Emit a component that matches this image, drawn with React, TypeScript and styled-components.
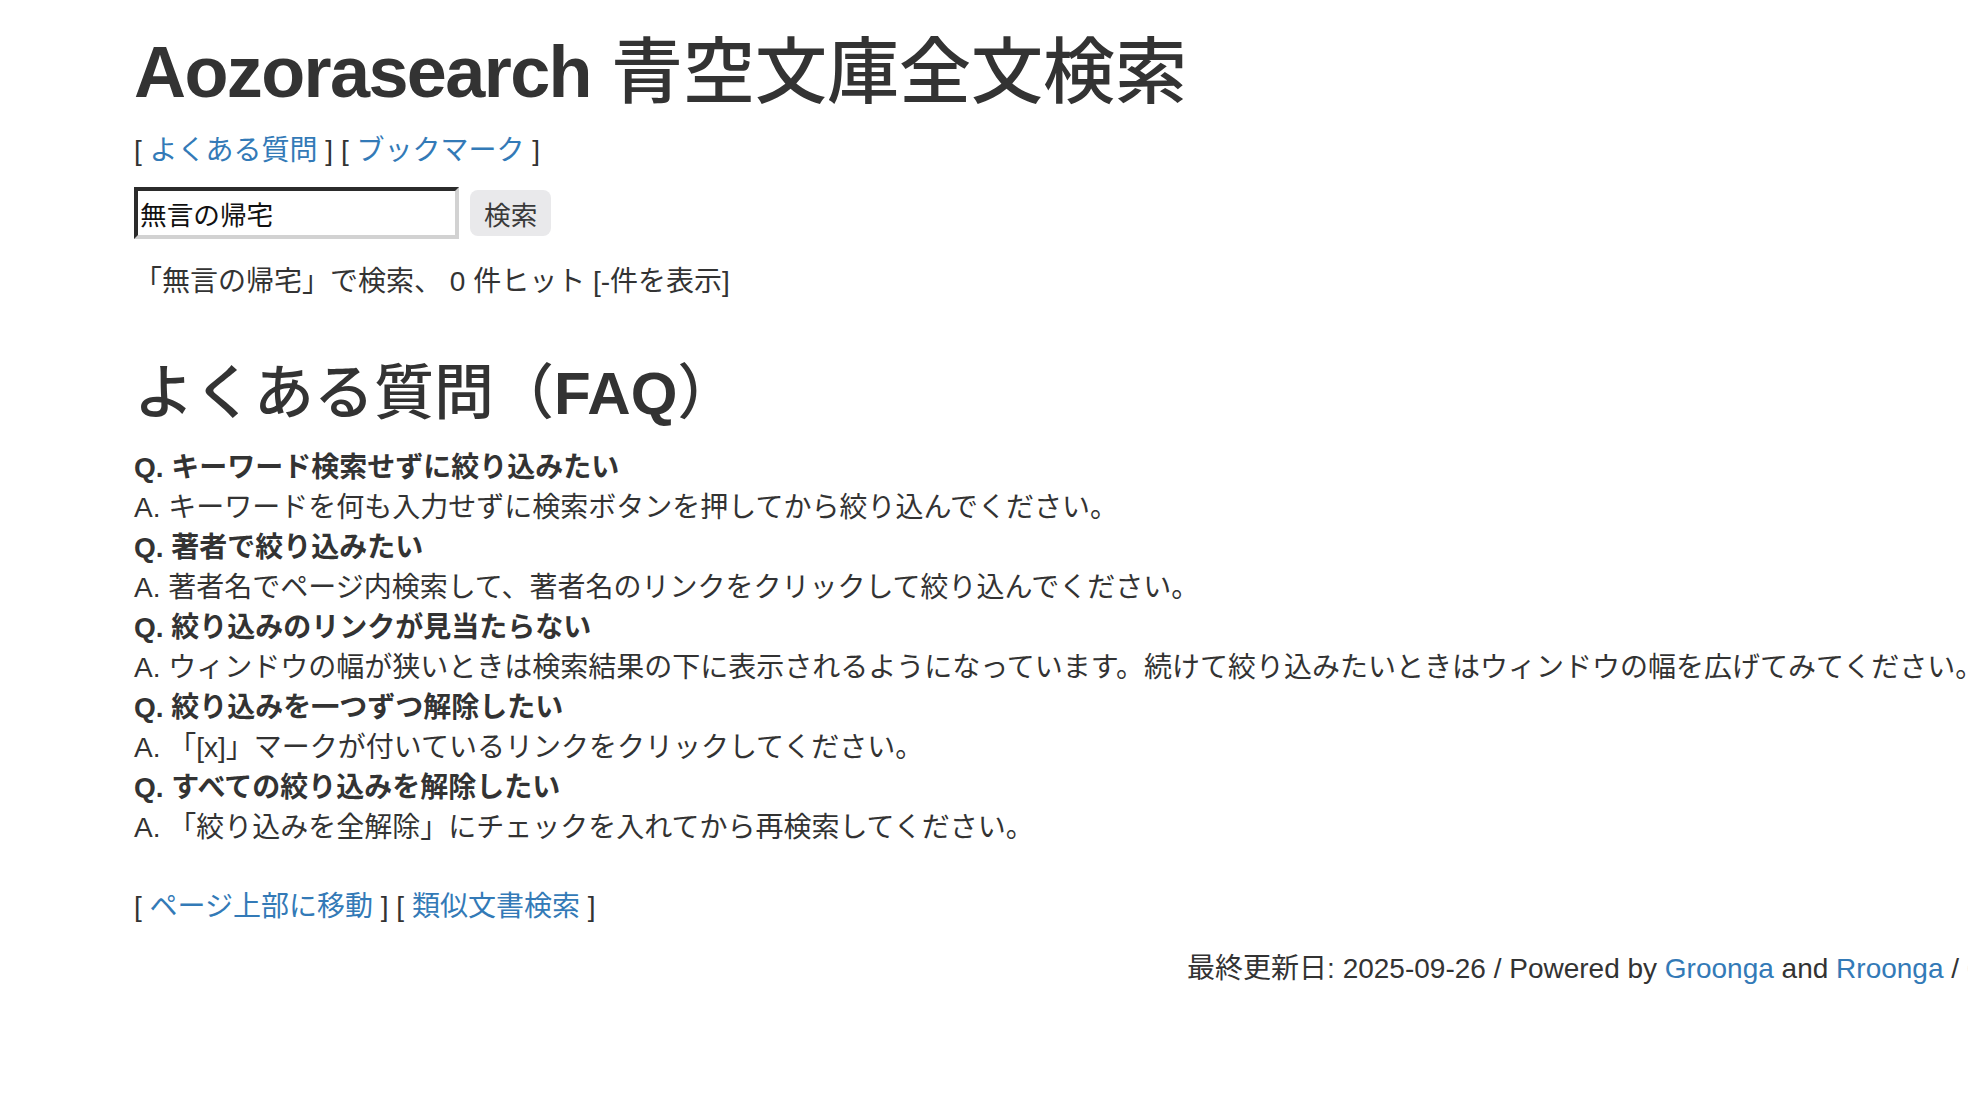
import styled, { createGlobalStyle } from "styled-components";

const GlobalStyle = createGlobalStyle`
  html, body {
    margin: 0;
    padding: 0;
    background: #fff;
    overflow: hidden;
  }
  body {
    font-family: "Liberation Sans", "Noto Sans CJK JP", sans-serif;
    font-size: 28px;
    line-height: 40px;
    color: #333;
  }
`;

const Page = styled.div`
  width: 2054px;
  padding: 0 0 60px 134px;
  box-sizing: border-box;
`;

const Title = styled.h1`
  margin: 33px 0 0;
  font-size: 72px;
  line-height: 79px;
  font-weight: 500;
  white-space: nowrap;
`;

const Latin = styled.span`
  font-weight: 700;
  letter-spacing: ${({ $tight }: { $tight?: boolean }) => ($tight ? "-1.6px" : "0")};
`;

const Line = styled.p<{ $top?: number }>`
  margin: ${({ $top }) => $top ?? 0}px 0 0;
  white-space: nowrap;
`;

const Link = styled.a`
  color: #337ab7;
  text-decoration: none;
`;

const SearchForm = styled.form`
  display: flex;
  align-items: center;
  gap: 11px;
  margin-top: 16px;
`;

const SearchInput = styled.input`
  width: 325px;
  height: 52px;
  box-sizing: border-box;
  padding: 0 2px;
  border-style: solid;
  border-width: 4px;
  border-color: #2b2b2b #d2d2d2 #d2d2d2 #2b2b2b;
  font-family: "Liberation Sans", "Noto Sans CJK JP", sans-serif;
  font-size: 26.67px;
  color: #111;
  background: #fff;
  outline: none;
`;

const SearchButton = styled.button`
  height: 46px;
  padding: 0 14px;
  border: none;
  border-radius: 8px;
  background: #e9e9eb;
  font-family: "Liberation Sans", "Noto Sans CJK JP", sans-serif;
  font-size: 26.67px;
  color: #3a3a3a;
`;

const FaqTitle = styled.h2`
  margin: 59px 0 0;
  font-size: 60px;
  line-height: 66px;
  font-weight: 500;
  white-space: nowrap;
`;

const FaqList = styled.dl`
  margin: 21px 0 0;
`;

const Question = styled.dt`
  font-weight: 700;
  white-space: nowrap;
`;

const Answer = styled.dd`
  margin: 0;
  white-space: nowrap;
`;

const Footer = styled.p`
  margin: 22px 0 0;
  text-align: right;
  white-space: nowrap;
`;

const faqs = [
  {
    q: "キーワード検索せずに絞り込みたい",
    a: "キーワードを何も入力せずに検索ボタンを押してから絞り込んでください。",
  },
  {
    q: "著者で絞り込みたい",
    a: "著者名でページ内検索して、著者名のリンクをクリックして絞り込んでください。",
  },
  {
    q: "絞り込みのリンクが見当たらない",
    a: "ウィンドウの幅が狭いときは検索結果の下に表示されるようになっています。続けて絞り込みたいときはウィンドウの幅を広げてみてください。",
  },
  {
    q: "絞り込みを一つずつ解除したい",
    a: "「[x]」マークが付いているリンクをクリックしてください。",
  },
  {
    q: "すべての絞り込みを解除したい",
    a: "「絞り込みを全解除」にチェックを入れてから再検索してください。",
  },
];

export default function App() {
  return (
    <Page>
      <GlobalStyle />
      <Title>
        <Latin $tight>Aozorasearch</Latin> 青空文庫全文検索
      </Title>
      <Line $top={19}>
        [ <Link href="#faq">よくある質問</Link> ] [{" "}
        <Link href="#bookmark">ブックマーク</Link> ]
      </Line>
      <SearchForm onSubmit={(e) => e.preventDefault()}>
        <SearchInput type="text" defaultValue="無言の帰宅" />
        <SearchButton type="submit">検索</SearchButton>
      </SearchForm>
      <Line $top={23}>「無言の帰宅」で検索、 0 件ヒット [-件を表示]</Line>

      <FaqTitle id="faq">
        よくある質問（<Latin>FAQ</Latin>）
      </FaqTitle>
      <FaqList>
        {faqs.map((item) => (
          <div key={item.q}>
            <Question>Q. {item.q}</Question>
            <Answer>A. {item.a}</Answer>
          </div>
        ))}
      </FaqList>

      <Line $top={39}>
        [ <Link href="#top">ページ上部に移動</Link> ] [{" "}
        <Link href="#similar">類似文書検索</Link> ]
      </Line>
      <Footer>
        最終更新日: 2025-09-26 / Powered by <Link href="#groonga">Groonga</Link>{" "}
        and <Link href="#rroonga">Rroonga</Link> / <Link href="#source">GitHub</Link>
      </Footer>
    </Page>
  );
}
